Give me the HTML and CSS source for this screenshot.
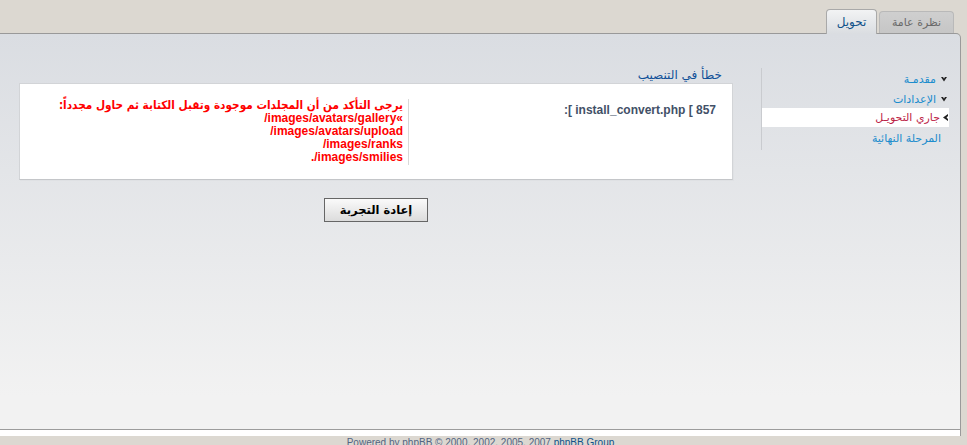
FILE: index.html
```html
<!DOCTYPE html>
<html lang="ar" dir="rtl">
<head>
<meta charset="utf-8">
<title>تحويل</title>
<link rel="stylesheet" href="styles.css">
</head>
<body>
<div class="page">
  <ul class="tabs">
    <li class="tab"><a href="#">نظرة عامة</a></li>
    <li class="tab active"><a href="#">تحويل</a></li>
  </ul>
  <div class="panel">
    <div class="panel-body">
      <ul class="menu">
        <li class="item"><svg class="ico" width="6" height="5" viewBox="0 0 6 5"><polygon points="0,0 2,0 3,1.5 4,0 6,0 3,4.5" fill="#222"/></svg><a href="#">مقدمـة</a></li>
        <li class="item"><svg class="ico" width="6" height="5" viewBox="0 0 6 5"><polygon points="0,0 2,0 3,1.5 4,0 6,0 3,4.5" fill="#222"/></svg><a href="#">الإعدادات</a></li>
        <li class="item current"><svg class="ico" width="5" height="7" viewBox="0 0 5 7"><polygon points="5,0 5,2 3.5,3.5 5,5 5,7 0,3.5" fill="#222"/></svg><a href="#">جاري التحويـل</a></li>
        <li class="item noicon"><a href="#">المرحلة النهائية</a></li>
      </ul>
      <div class="main">
        <h2 class="legend">خطأ في التنصيب</h2>
        <div class="box">
          <div class="row">
            <div class="label"><bdo dir="ltr">:[ install_convert.php [ 857</bdo></div>
            <div class="result"><b><span class="ar">يرجى التأكد من أن المجلدات موجودة وتقبل الكتابة ثم حاول مجدداً:</span><br>»images/avatars/gallery/<br>images/avatars/upload/<br>images/ranks/<br>images/smilies/.</b></div>
          </div>
        </div>
        <div class="actions"><button class="btn" type="button">إعادة التجربة</button></div>
      </div>
    </div>
    <div class="panel-foot"></div>
  </div>
  <div class="footer">Powered by phpBB © 2000, 2002, 2005, 2007 <a href="#">phpBB Group</a></div>
</div>
</body>
</html>
```

FILE: styles.css
```css
html, body {
  margin: 0;
  padding: 0;
  height: 100%;
  overflow: hidden;
}
body {
  background: #dcd8d1;
  direction: rtl;
  font-family: "Liberation Sans", "DejaVu Sans", sans-serif;
  font-size: 11px;
  color: #536482;
}
.page {
  padding-right: 6px;
  padding-top: 9px;
}
.tabs {
  list-style: none;
  margin: 0;
  padding: 0 7px 0 0;
  display: flex;
  gap: 2px;
  align-items: flex-end;
  height: 24px;
}
.tab {
  height: 22px;
  box-sizing: border-box;
  border: 1px solid #b9b9b9;
  border-bottom: none;
  border-radius: 4px 4px 0 0;
  background: linear-gradient(#cfcfcf, #c6c6c6);
  display: flex;
  align-items: center;
  justify-content: center;
  padding: 0 9px;
  width: 75px;
}
.tab a {
  color: #6a6a6a;
  text-decoration: none;
  font-family: "DejaVu Sans", sans-serif;
  font-size: 11px;
}
.tab.active {
  height: 25px;
  width: 51px;
  margin-bottom: -1px;
  border-color: #a9a9a9;
  background: linear-gradient(#f2f3f4, #dadde1);
}
.tab.active a {
  color: #105289;
  font-size: 12px;
}
.panel {
  border-top: 1px solid #999;
  border-right: 1px solid #9a9a9a;
  border-top-right-radius: 5px;
  background: linear-gradient(#dadde2, #f2f2f2 90%);
  height: 402px;
  display: flex;
  flex-direction: column;
}
.panel-body {
  flex: 1;
  display: flex;
  gap: 28px;
  padding: 34px 11px 0 0;
  border-bottom: 1px solid #9c9c9c;
}
.menu {
  list-style: none;
  margin: 0;
  padding: 1px 0 1px 0;
  width: 187px;
  height: 80px;
  border-left: 1px solid #c9cbcf;
}
.item {
  height: 20px;
  display: flex;
  align-items: center;
  gap: 5px;
  padding-right: 2px;
}
.item a {
  color: #1b8ccd;
  text-decoration: none;
  font-family: "DejaVu Sans", sans-serif;
  font-size: 11px;
}
.item.current {
  background: #fff;
  height: 19px;
  margin-top: -1px;
  margin-bottom: 1px;
  gap: 3px;
  padding-right: 1px;
}
.item.current a {
  color: #bc2346;
}
.item.noicon {
  padding-right: 8px;
}
.main {
  width: 714px;
  display: flex;
  flex-direction: column;
}
.legend {
  margin: 0 11px 0 0;
  font-family: "DejaVu Sans", sans-serif;
  font-weight: normal;
  font-size: 12px;
  color: #115098;
  line-height: 14px;
  height: 15px;
}
.box {
  background: #fff;
  border: 1px solid #d2d4d7;
  border-bottom-color: #c4c6c9;
  box-shadow: 1px 1px 0 #dfe1e4;
  padding: 15px 0 14px 0;
}
.row {
  display: flex;
}
.label {
  width: 307px;
  padding-right: 16px;
  padding-top: 4px;
  font-weight: bold;
  font-size: 12px;
  color: #425067;
  border-left: 1px solid #d9d9d9;
}
.result {
  padding-right: 5px;
  color: #f00;
  font-size: 12px;
  line-height: 13px;
  padding-bottom: 1px;
}
.ar {
  font-family: "DejaVu Sans Condensed", "DejaVu Sans", sans-serif;
  font-size: 11.7px;
  line-height: 13px;
  white-space: nowrap;
}
.actions {
  display: flex;
  justify-content: center;
  padding-top: 18px;
}
.btn {
  width: 104px;
  height: 24px;
  border: 1px solid #666;
  background: linear-gradient(#fafafa, #dcdcdc);
  font-family: "DejaVu Sans", sans-serif;
  font-weight: bold;
  font-size: 11.5px;
  color: #000;
  padding: 0;
}
.panel-foot {
  height: 6px;
  background: #fff;
}
.footer {
  text-align: center;
  padding-top: 1px;
  font-size: 10px;
  color: #536482;
  direction: ltr;
}
.footer a {
  color: #105289;
  text-decoration: none;
}
```
